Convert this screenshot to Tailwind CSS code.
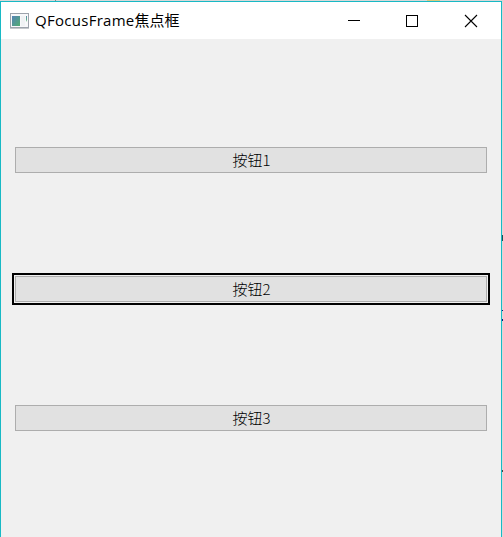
<!DOCTYPE html>
<html lang="zh">
<head>
<meta charset="utf-8">
<title>QFocusFrame焦点框</title>
<script src="https://cdn.jsdelivr.net/npm/@tailwindcss/browser@4"></script>
</head>
<body class="w-[503px] h-[537px] overflow-hidden bg-[#d8d8d8] flex flex-col relative font-['Open_Sans','Noto_Sans_CJK_SC',sans-serif] text-black">
  <div class="h-px shrink-0 flex">
    <div class="w-[55px]"></div><div class="w-px bg-[#888]"></div><div class="w-[371px]"></div><div class="w-[13px] bg-[#d9cb7e]"></div>
  </div>
  <main class="w-[502px] flex-1 border-x border-t border-[#18b9c5] bg-[#f0f0f0] flex flex-col">
    <header class="h-[37px] shrink-0 bg-white flex items-center">
      <svg class="ml-[9px] shrink-0" width="19" height="16" viewBox="0 0 19 16">
        <defs>
          <linearGradient id="a" x1="0" y1="0" x2="1" y2="1"><stop offset="0" stop-color="#5583b5"/><stop offset="1" stop-color="#50ac71"/></linearGradient>
          <linearGradient id="b" x1="0" y1="0" x2="0" y2="1"><stop offset="0" stop-color="#5a8cab"/><stop offset="1" stop-color="#65c47a"/></linearGradient>
        </defs>
        <rect x=".5" y=".5" width="18" height="14" fill="#f8f8fa" stroke="#9da3ac"/>
        <path d="M0 15.5h19" stroke="#c5c8cc"/>
        <rect x="2" y="3" width="8" height="10" fill="url(#a)"/>
        <rect x="11" y="3" width="4" height="10" fill="#f0f2f4"/>
        <path d="M16 3h1v6l-1-2z" fill="url(#b)"/>
      </svg>
      <h1 class="ml-[6px] pb-[2px] text-[15px] leading-5 w-[298px] whitespace-nowrap"><span class="tracking-[0.28px]">QFocusFrame</span>焦点框</h1>
      <svg class="ml-[14px] shrink-0" width="14" height="14" viewBox="0 0 14 14" shape-rendering="crispEdges"><path d="M1 6h12v1H1z"/></svg>
      <svg class="ml-[44px] shrink-0" width="14" height="14" viewBox="0 0 14 14" fill="none" stroke="#000" shape-rendering="crispEdges"><path d="M1.5 1.5h11v11h-11z"/></svg>
      <svg class="ml-[45px] shrink-0" width="14" height="14" viewBox="0 0 14 14" fill="none" stroke="#000" stroke-width="1.1"><path d="M1 1l12 12M13 1L1 13"/></svg>
    </header>
    <section class="flex flex-col gap-[100px] pt-[108px] px-[11px] text-[15px] font-light font-['Noto_Sans_CJK_SC',sans-serif]">
      <div class="px-[3px]"><button class="block w-full h-[26px] border border-[#adadad] bg-[#e1e1e1] leading-6 pl-px">按钮1</button></div>
      <div class="border-2 border-black p-px"><button class="block w-full h-[26px] border border-[#adadad] bg-[#e1e1e1] leading-6 pl-px">按钮2</button></div>
      <div class="px-[3px]"><button class="block w-full h-[26px] border border-[#adadad] bg-[#e1e1e1] leading-6 pl-px">按钮3</button></div>
    </section>
  </main>
  <div class="absolute left-[502px] top-[235px] w-px h-1.5 bg-[#234c50]"></div>
  <div class="absolute left-[502px] top-[310px] w-px h-px bg-[#10107a]"></div>
  <div class="absolute left-[502px] top-[319px] w-px h-0.5 bg-[#10107a]"></div>
  <div class="absolute left-[502px] top-[470px] w-px h-0.5 bg-[#444]"></div>
</body>
</html>
